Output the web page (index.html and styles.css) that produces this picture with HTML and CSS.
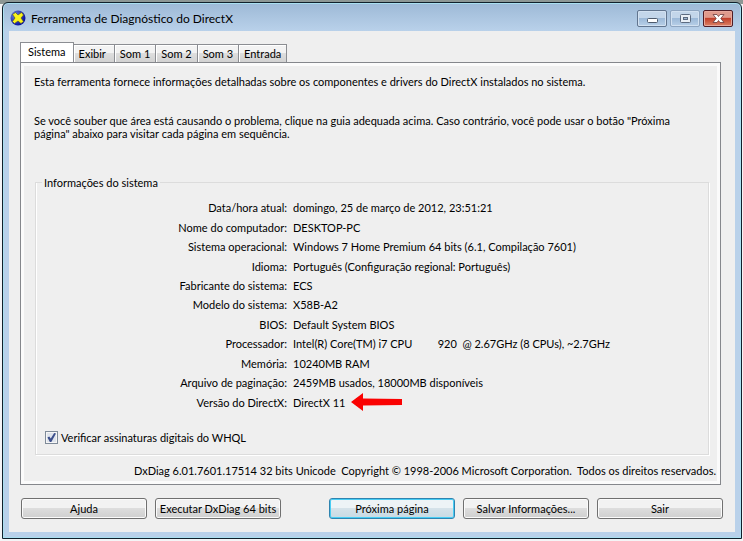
FILE: index.html
```html
<!DOCTYPE html>
<html lang="pt-BR">
<head>
<meta charset="utf-8">
<title>Ferramenta de Diagnóstico do DirectX</title>
<link rel="stylesheet" href="styles.css">
</head>
<body>
<main class="window">
  <header class="titlebar">
    <svg class="app-icon" viewBox="0 0 16 16" aria-hidden="true">
      <defs><radialGradient id="orb" cx="0.3" cy="0.3" r="0.7"><stop offset="0" stop-color="#6f83d8"/><stop offset="1" stop-color="#0c14a0"/></radialGradient></defs>
      <circle cx="8" cy="8" r="7.500" fill="url(#orb)"/>
      <path d="M2.500 4.500L5.500 2.500L8 5L11.500 2.500L13.500 5L11 8L13.500 11.500L11 13.500L8 11L4.500 13.500L2.500 11.500L5 8Z" fill="#faf31c" stroke="#4b4c20" stroke-width=".6"/>
    </svg>
    <h1 class="title">Ferramenta de Diagnóstico do DirectX</h1>
    <div class="caption-buttons">
      <button class="caption" type="button" aria-label="Minimizar"><svg viewBox="0 0 28 15"><rect x="9.500" y="7.500" width="10" height="4" rx="1" fill="#fff" stroke="#4d5a6c"/></svg></button>
      <button class="caption caption-dim" type="button" aria-label="Maximizar"><svg viewBox="0 0 28 15"><rect x="9.500" y="3.500" width="10" height="8" rx="1" fill="#e9eff6" stroke="#5c6b80"/><rect x="12.500" y="6.500" width="4" height="2" fill="#9db6d1" stroke="#5c6b80"/></svg></button>
      <button class="caption caption-close" type="button" aria-label="Fechar"><svg viewBox="0 0 28 15"><path d="M9 3.500h4L14.500 5.500l1.500-2H20L16.800 7.500l3.200 4H16L14.500 9.500 13 11.500H9l3.200-4z" fill="#fff" stroke="#6b3a3a" stroke-width=".8"/></svg></button>
    </div>
  </header>
  <div class="client">
    <nav class="tabs" role="tablist">
      <button class="tab tab-active" type="button" role="tab" aria-selected="true">Sistema</button>
      <button class="tab tab-display" type="button" role="tab">Exibir</button>
      <button class="tab" type="button" role="tab">Som 1</button>
      <button class="tab" type="button" role="tab">Som 2</button>
      <button class="tab" type="button" role="tab">Som 3</button>
      <button class="tab" type="button" role="tab">Entrada</button>
    </nav>
    <section class="panel">
      <p class="intro">Esta ferramenta fornece informações detalhadas sobre os componentes e drivers do DirectX instalados no sistema.</p>
      <p class="hint">Se você souber que área está causando o problema, clique na guia adequada acima. Caso contrário, você pode usar o botão "Próxima página" abaixo para visitar cada página em sequência.</p>
      <fieldset class="group">
        <legend>Informações do sistema</legend>
        <dl class="info">
          <dt>Data/hora atual:</dt><dd>domingo, 25 de março de 2012, 23:51:21</dd>
          <dt>Nome do computador:</dt><dd>DESKTOP-PC</dd>
          <dt>Sistema operacional:</dt><dd>Windows 7 Home Premium 64 bits (6.1, Compilação 7601)</dd>
          <dt>Idioma:</dt><dd>Português (Configuração regional: Português)</dd>
          <dt>Fabricante do sistema:</dt><dd>ECS</dd>
          <dt>Modelo do sistema:</dt><dd>X58B-A2</dd>
          <dt>BIOS:</dt><dd>Default System BIOS</dd>
          <dt>Processador:</dt><dd>Intel(R) Core(TM) i7 CPU         920  @ 2.67GHz (8 CPUs), ~2.7GHz</dd>
          <dt>Memória:</dt><dd>10240MB RAM</dd>
          <dt>Arquivo de paginação:</dt><dd>2459MB usados, 18000MB disponíveis</dd>
          <dt>Versão do DirectX:</dt><dd class="marked">DirectX 11 <svg class="arrow" viewBox="0 0 52 18" aria-hidden="true"><path d="M0 9L12 0V5.500L51 6V12L12 12.500V18Z" fill="#fa0202"/></svg></dd>
        </dl>
        <label class="check"><input type="checkbox" checked>Verificar assinaturas digitais do WHQL</label>
      </fieldset>
      <p class="version">DxDiag 6.01.7601.17514 32 bits Unicode  Copyright © 1998-2006 Microsoft Corporation.  Todos os direitos reservados.</p>
    </section>
    <footer class="actions">
      <button class="btn" type="button">Ajuda</button>
      <button class="btn" type="button">Executar DxDiag 64 bits</button>
      <button class="btn btn-default" type="button">Próxima página</button>
      <button class="btn" type="button">Salvar Informações...</button>
      <button class="btn" type="button">Sair</button>
    </footer>
  </div>
</main>
</body>
</html>
```
FILE: styles.css
```css
* { box-sizing: border-box; }
body {
  margin: 0;
  padding: 2px 1px 2px 2px;
  min-height: 100vh;
  display: flex;
  background: linear-gradient(#8d9795 0 4px, #f4f4f6 4px);
  font: 11px/13px Lato, sans-serif;
  color: #000;
}
button, input { font: inherit; color: inherit; margin: 0; }
p, h1, dl, dd { margin: 0; }
.window {
  flex: 1;
  display: flex;
  flex-direction: column;
  padding: 0 6px 6px;
  border: 1px solid #10202c;
  border-radius: 6px 6px 0 0;
  background: linear-gradient(#9db9d6, #b9d1ea 28px);
  box-shadow: inset 0 0 0 1px #a9dff0;
}
.titlebar {
  height: 28px;
  display: flex;
  align-items: center;
  padding: 2px 2px 0 1px;
}
.app-icon { width: 16px; height: 16px; margin-right: 5px; }
.title { flex: 1; font-size: 12px; font-weight: normal; }
.caption-buttons { display: flex; gap: 3px; }
.caption {
  width: 30px;
  height: 17px;
  padding: 0;
  border: 1px solid #61758f;
  border-radius: 2px;
  background: linear-gradient(#c3d6ea 45%, #9cb9d8 50%, #b8d0e8);
  box-shadow: inset 0 0 0 1px #d2e1f1;
}
.caption svg { display: block; width: 28px; height: 15px; }
.caption-dim { border-color: #8ea5c0; }
.caption-close {
  border-color: #4f1c25;
  background: linear-gradient(#e09a8c 42%, #c2402b 50%, #dc8265);
  box-shadow: inset 0 0 0 1px #e7a89c;
}
.client {
  flex: 1;
  display: flex;
  flex-direction: column;
  padding: 11px 12px 13px 11px;
  background: #efefef;
}
.tabs { display: flex; align-items: flex-end; height: 21px; margin-bottom: -1px; }
.tab {
  height: 19px;
  padding: 0 5px;
  border: 1px solid #8b8d92;
  border-left-width: 0;
  background: linear-gradient(#f3f3f3 45%, #dedede 50%, #d2d2d2);
  box-shadow: inset 1px 1px #fff;
}
.tab-active {
  height: 21px;
  padding: 0 7px 2px;
  border-left-width: 1px;
  border-bottom-color: #fff;
  background: #fff;
}
.tab-display { padding-right: 8px; }
.panel {
  flex: 1;
  display: flex;
  flex-direction: column;
  margin-right: 2px;
  padding: 12px 4px 7px 13px;
  border: 1px solid #85878c;
  background: #efefef;
  box-shadow: inset 0 0 0 3px #fbfbfb;
}
.intro { margin-bottom: 26px; }
.hint { margin-bottom: 36px; padding-right: 24px; }
.group {
  flex: 1;
  margin: 0 7px 9px 1px;
  padding: 9px 9px 10px 8px;
  border: 1px solid #dcdcdc;
  box-shadow: inset 1px 0 #fff, 1px 1px #fff;
  display: flex;
  flex-direction: column;
}
.group legend { margin-left: -2px; padding: 0 2px; }
.info {
  display: grid;
  grid-template-columns: 243px 1fr;
  grid-auto-rows: 1fr;
  column-gap: 6px;
  align-items: center;
  height: 214px;
  white-space: pre;
}
.info dt { text-align: right; }
.marked { display: flex; align-items: center; }
.arrow { width: 52px; height: 18px; margin-left: 3px; }
.check { display: flex; align-items: center; gap: 3px; margin: 19px 0 0 1px; }
.check input {
  appearance: none;
  display: grid;
  width: 13px;
  height: 13px;
  border: 1px solid #7f8b99;
  background: #dfe4ec;
  box-shadow: inset 0 0 0 1px #f6f6f6;
}
.check input:checked::before {
  content: "";
  margin: 1px;
  background: #3c4f8c;
  clip-path: polygon(5% 50%, 25% 38%, 42% 62%, 80% 0, 100% 6%, 48% 100%, 32% 100%);
}
.version { text-align: right; white-space: pre-wrap; }
.actions { display: flex; gap: 8px; margin: 13px 0 0 1px; }
.btn {
  flex: 0 1 126px;
  min-width: 0;
  height: 21px;
  padding: 0 2px;
  border: 1px solid #707070;
  border-radius: 3px;
  background: linear-gradient(#f2f2f2 45%, #dddddd 50%, #cfcfcf);
  box-shadow: inset 0 0 0 1px #fbfbfb;
  white-space: nowrap;
}
.btn-default {
  margin-left: auto;
  border-color: #2f84b0;
  background: linear-gradient(#edf3f6 45%, #d5e2e9 50%, #c8dae4);
  box-shadow: inset 0 0 0 1px #48cdf4;
}
```
